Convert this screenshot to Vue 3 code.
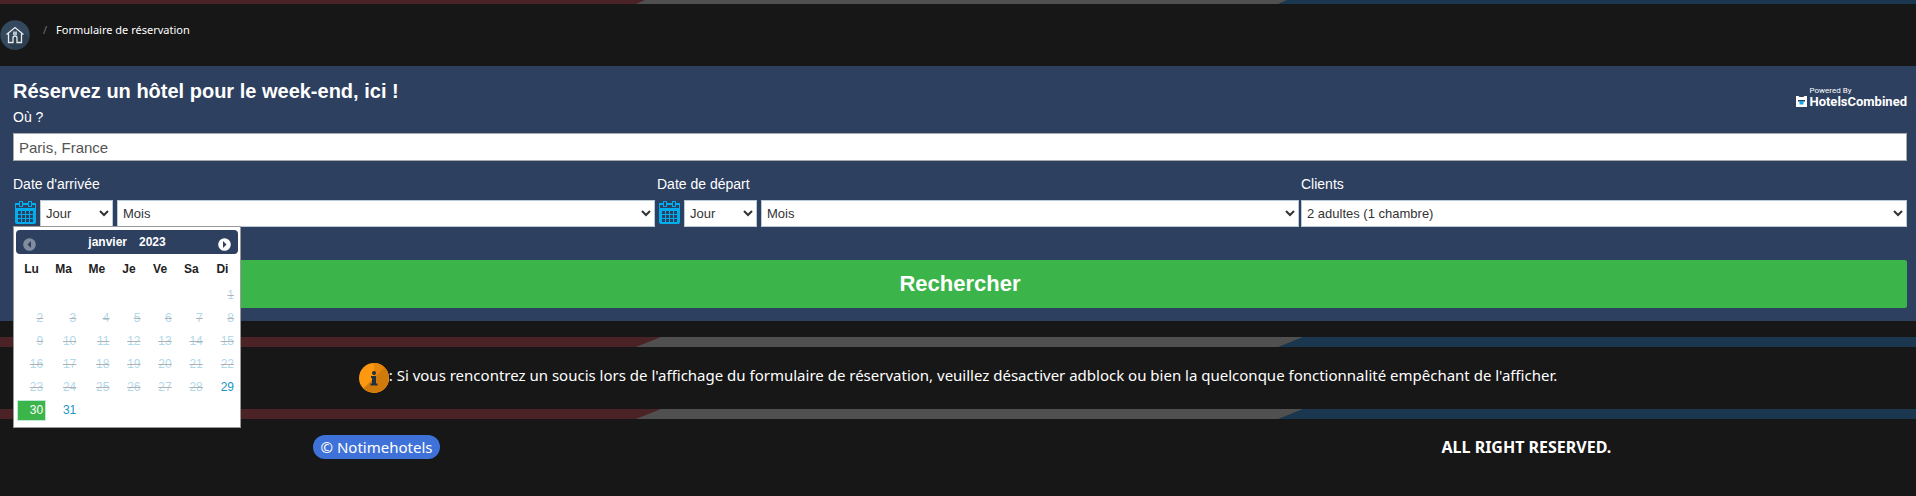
<script setup>
import { ref } from 'vue'

const place = ref('Paris, France')
const dayNames = ['Lu', 'Ma', 'Me', 'Je', 'Ve', 'Sa', 'Di']
const weeks = [
  [null, null, null, null, null, null, 1],
  [2, 3, 4, 5, 6, 7, 8],
  [9, 10, 11, 12, 13, 14, 15],
  [16, 17, 18, 19, 20, 21, 22],
  [23, 24, 25, 26, 27, 28, 29],
  [30, 31, null, null, null, null, null],
]
const firstOpenDay = 29
const selectedDay = ref(30)
const dateFields = [
  { id: 'arrival', label: "Date d'arrivée", picker: true },
  { id: 'departure', label: 'Date de départ', picker: false },
]
</script>

<template>
  <div class="page">
    <div class="stripe stripe-top"></div>
    <nav class="crumbs">
      <a href="#" class="home" aria-label="Accueil">
        <svg width="30" height="30" viewBox="0 0 30 30">
          <circle cx="15" cy="15" r="14.7" fill="#34495e" />
          <path d="M23 12 29.5 18A14.7 14.7 0 0 1 14 29.6L8 23Z" fill="#2c3e50" />
          <path d="M6.5 14.5 15 7.5l8.500 7M8.500 13.500V22.500h4.500v-4.500a2 2 0 0 1 4 0v4.500H21.500V13.500" fill="none" stroke="#e8ebee" stroke-width="1.300" />
          <path d="M13 11.500h4v3.500h-4z" fill="#b7c0c9" />
        </svg>
      </a>
      <span class="slash">/</span>
      <span class="current">Formulaire de réservation</span>
    </nav>

    <form class="search" @submit.prevent>
      <div class="top">
        <div>
          <h1>Réservez un hôtel pour le week-end, ici !</h1>
          <label for="place">Où ?</label>
        </div>
        <div class="brand">
          <span class="powered">Powered By</span>
          <span class="brand-name">
            <svg width="11" height="11" viewBox="0 0 11 11">
              <path d="M0 0h2.500l1 1h4l1-1H11v11H0z" fill="#fff" />
              <path d="M2 4h7v1.500H2z" fill="#27405e" />
              <path d="M3.500 5h4v3.500h-4z" fill="#16a5e8" />
            </svg>
            HotelsCombined
          </span>
        </div>
      </div>
      <input id="place" v-model="place" class="place" type="text" />

      <div class="fields">
        <div v-for="field in dateFields" :key="field.id" class="field">
          <label :for="field.id + '-day'">{{ field.label }}</label>
          <div class="date-row">
            <button type="button" class="cal-btn" :aria-label="field.label">
              <svg width="21" height="23" viewBox="0 0 21 23">
                <path d="M0 2h21v19q0 2-2 2H2q-2 0-2-2z" fill="#00aeef" />
                <path d="M1 4h19v3H1z" fill="#2d4060" />
                <path d="M4 0h4v6H4zM13 0h4v6h-4z" fill="#00aeef" />
                <path d="M5 1h2v4H5zM14 1h2v4h-2z" fill="#2d4060" />
                <path d="M3 11.500h15M3 15.500h15M3 19.500h15" stroke="#2d4060" stroke-width="3" stroke-dasharray="3 1" fill="none" />
              </svg>
            </button>
            <select :id="field.id + '-day'" class="day"><option>Jour</option></select>
            <select class="month" :aria-label="field.label + ' : mois'"><option>Mois</option></select>
          </div>

          <div v-if="field.picker" class="picker">
            <div class="picker-head">
              <button type="button" class="nav-btn off" aria-label="Mois précédent" disabled>
                <svg width="13" height="13" viewBox="0 0 13 13"><circle cx="6.500" cy="6.500" r="6.300" fill="#fff" /><path d="M8 3v7L4.500 6.500z" fill="#2d4060" /></svg>
              </button>
              <span class="picker-title"><span>janvier</span><span>2023</span></span>
              <button type="button" class="nav-btn" aria-label="Mois suivant">
                <svg width="13" height="13" viewBox="0 0 13 13"><circle cx="6.500" cy="6.500" r="6.300" fill="#fff" /><path d="M5 3v7l3.500-3.500z" fill="#2d4060" /></svg>
              </button>
            </div>
            <table>
              <thead>
                <tr><th v-for="name in dayNames" :key="name" scope="col">{{ name }}</th></tr>
              </thead>
              <tbody>
                <tr v-for="(week, w) in weeks" :key="w">
                  <td v-for="(day, d) in week" :key="d">
                    <template v-if="day">
                      <a v-if="day >= firstOpenDay" href="#" :class="{ chosen: day === selectedDay }" @click.prevent="selectedDay = day">{{ day }}</a>
                      <s v-else><span>{{ day }}</span></s>
                    </template>
                  </td>
                </tr>
              </tbody>
            </table>
          </div>
        </div>
        <div class="field">
          <label for="guests">Clients</label>
          <select id="guests" class="guests"><option>2 adultes (1 chambre)</option></select>
        </div>
      </div>

      <button type="submit" class="submit">Rechercher</button>
    </form>

    <div class="stripe"></div>
    <p class="notice">
      <svg width="30" height="30" viewBox="0 0 30 30">
        <circle cx="15" cy="15" r="15" fill="#ff9811" />
        <path d="M15 0a15 15 0 0 1 0 30z" fill="#e8860c" />
        <path d="M25.600 4.400A15 15 0 0 1 4.400 25.600z" fill="#d07a0c" />
        <circle cx="15" cy="10" r="2" fill="#22303d" />
        <path d="M12 13h5v7.500h1.500V22.500h-7V20.500H13V15h-1z" fill="#22303d" />
      </svg>
      <span>: Si vous rencontrez un soucis lors de l'affichage du formulaire de réservation, veuillez désactiver adblock ou bien la quelconque fonctionnalité empêchant de l'afficher.</span>
    </p>
    <div class="stripe"></div>
    <footer>
      <span class="cell"><a href="#" class="pill">© Notimehotels</a></span>
      <strong class="cell">ALL RIGHT RESERVED.</strong>
    </footer>
  </div>
</template>

<style>
body {
  margin: 0;
  background: #171717;
}
</style>

<style scoped>
* {
  box-sizing: border-box;
}
.page {
  color: #fff;
  font-family: "Noto Sans", "Open Sans", sans-serif;
  font-size: 15px;
  line-height: 24px;
}
.stripe {
  display: flex;
  justify-content: space-between;
  height: 10px;
  background: #505050;
}
.stripe::before,
.stripe::after {
  content: "";
  background: #4b2326;
  width: calc(33.3% + 23px);
  clip-path: polygon(0 0, 100% 0, calc(100% - 25px) 100%, 0 100%);
}
.stripe::after {
  background: #1b364f;
  width: 33.3%;
  clip-path: polygon(25px 0, 100% 0, 100% 100%, 0 100%);
}
.stripe-top {
  height: 4px;
}
.stripe-top::before {
  width: calc(33.3% + 7px);
  clip-path: polygon(0 0, 100% 0, calc(100% - 9px) 100%, 0 100%);
}
.stripe-top::after {
  clip-path: polygon(9px 0, 100% 0, 100% 100%, 0 100%);
}
.crumbs {
  display: flex;
  align-items: flex-start;
  height: 62px;
  padding-top: 16px;
  font-size: 11px;
  line-height: 20px;
}
.home svg {
  display: block;
}
.slash {
  padding: 0 9px 0 13px;
  color: #6c757d;
}
.search {
  padding: 13px 9px 13px 13px;
  background: #2d4060;
  font-family: "Liberation Sans", Arial, sans-serif;
  font-size: 14px;
  line-height: 18px;
}
.top {
  display: flex;
  justify-content: space-between;
}
h1 {
  margin: 0;
  font-size: 20px;
  line-height: 24px;
}
label {
  display: block;
}
.top label {
  margin-top: 5px;
}
.brand {
  display: flex;
  flex-direction: column;
  padding-top: 7px;
  font-family: Roboto, sans-serif;
}
.powered {
  padding-left: 13px;
  font-size: 8px;
  line-height: 9px;
}
.brand-name {
  display: flex;
  align-items: center;
  gap: 2px;
  font-size: 13px;
  font-weight: 700;
  line-height: 13px;
}
input,
select,
button {
  margin: 0;
  font-family: inherit;
}
.place {
  display: block;
  width: 100%;
  height: 28px;
  margin-top: 7px;
  padding: 0 5px;
  border: 1px solid #a9a9a9;
  color: #555;
  font-size: 15px;
}
.fields {
  display: grid;
  grid-template-columns: 642fr 642fr 606fr;
  gap: 2px;
  margin-top: 14px;
}
.field {
  position: relative;
}
.field > label {
  margin-bottom: 7px;
}
.date-row {
  display: flex;
}
.cal-btn {
  flex: none;
  display: flex;
  align-items: flex-start;
  width: 27px;
  padding: 1px 0 0 2px;
  border: 0;
  background: none;
}
.cal-btn svg {
  display: block;
}
select {
  height: 27px;
  padding: 0 1px;
  border: 1px solid #b9cbd6;
  border-radius: 0;
  background: #fff;
  color: #333;
  font-size: 13px;
}
.day {
  width: 73px;
  margin-right: 4px;
}
.month {
  flex: 1;
  min-width: 0;
}
.guests {
  display: block;
  width: 100%;
}
.submit {
  display: block;
  width: 100%;
  height: 48px;
  margin-top: 33px;
  border: 0;
  border-radius: 2px;
  background: #3bb54a;
  color: #fff;
  font-size: 22px;
  font-weight: 700;
}
.picker {
  position: absolute;
  z-index: 2;
  top: 51px;
  left: 0;
  width: 228px;
  padding: 3px 2px 5px 2px;
  border: 1px solid #999;
  background: #fff;
  color: #222;
  font-size: 12px;
}
.picker-head {
  display: flex;
  align-items: center;
  justify-content: space-between;
  height: 24px;
  padding: 0 7px;
  border-radius: 4px;
  background: #2d4060;
  color: #fff;
  font-weight: 700;
}
.picker-title {
  display: flex;
  gap: 12px;
}
.nav-btn {
  padding: 4px 0 0;
  border: 0;
  background: none;
}
.nav-btn svg {
  display: block;
}
.off {
  opacity: 0.4;
}
table {
  border-collapse: collapse;
  table-layout: fixed;
  width: 222px;
}
th {
  width: 31px;
  height: 30px;
  padding: 0;
  line-height: 30px;
}
th:nth-child(2),
th:nth-child(3) {
  width: 33px;
}
td {
  height: 23px;
  padding: 1px;
  text-align: right;
}
td a,
td s {
  display: block;
  padding: 0 2px;
  border: 1px solid transparent;
  line-height: 19px;
}
td a,
td span {
  color: #1c94c4;
  text-decoration: none;
}
td s {
  opacity: 0.35;
}
td .chosen {
  border-color: #bfe8d8;
  background: #3bb54a;
  color: #fff;
}
.search + .stripe {
  margin-top: 16px;
}
.notice {
  display: flex;
  justify-content: center;
  align-items: flex-start;
  margin: 0;
  padding: 16px 0;
}
footer {
  display: grid;
  grid-template-columns: 753fr 1163fr;
  padding: 16px 0 37px;
  text-align: center;
}
strong.cell {
  padding-left: 33%;
  font-size: 16px;
}
.pill {
  display: inline-block;
  padding: 0 8px;
  border-radius: 12px;
  background: #3f72d8;
  color: #fff;
  text-decoration: none;
}
</style>
